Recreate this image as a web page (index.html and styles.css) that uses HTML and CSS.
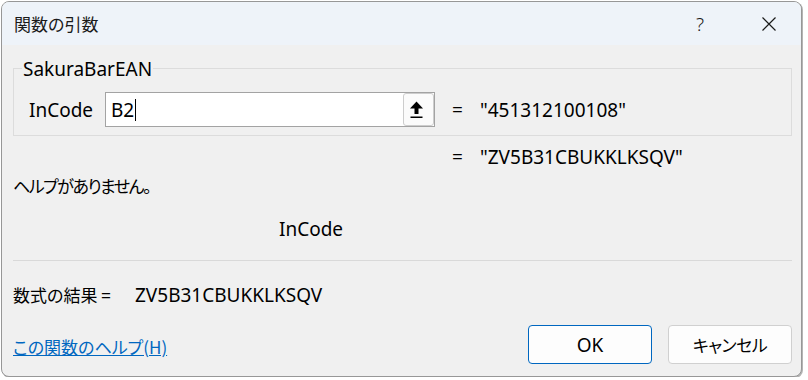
FILE: index.html
```html
<!DOCTYPE html>
<html lang="ja">
<head>
    <meta charset="UTF-8">
    <meta name="viewport" content="width=device-width, initial-scale=1.0">
    <title>関数の引数</title>
    <link rel="stylesheet" href="styles.css">
</head>
<body>
    <div class="dialog">
        <div class="titlebar">
            <span class="title ja">関数の引数</span>
            <span class="help-btn">?</span>
            <span class="close-btn">
                <svg width="14" height="14" viewBox="0 0 14 14"><path d="M0.5 0.5 L13.5 13.5 M13.5 0.5 L0.5 13.5" stroke="#1a1a1a" stroke-width="1.2" fill="none"/></svg>
            </span>
        </div>

        <div class="content">
            <div class="group">
                <span class="legend">SakuraBarEAN</span>
                <div class="arg-row">
                    <span class="arg-label">InCode</span>
                    <div class="ref-input">
                        <span class="ref-text">B2</span><span class="caret"></span>
                        <span class="collapse-btn">
                            <svg width="29" height="31" viewBox="0 0 29 31">
                                <polygon points="12.5,7.5 6,14.5 19,14.5" fill="#000"/>
                                <rect x="10.5" y="14" width="4" height="6" fill="#000"/>
                                <rect x="6.5" y="22.5" width="12" height="1.5" fill="#000"/>
                            </svg>
                        </span>
                    </div>
                    <span class="eq">=</span>
                    <span class="arg-value">"451312100108"</span>
                </div>
            </div>

            <div class="func-value"><span class="eq">=</span><span>"ZV5B31CBUKKLKSQV"</span></div>
            <p class="desc ja">ヘルプがありません。</p>
            <p class="arg-name">InCode</p>
            <div class="divider"></div>

            <div class="result">
                <span class="result-label ja">数式の結果 =</span>
                <span>ZV5B31CBUKKLKSQV</span>
            </div>

            <div class="footer">
                <a class="help-link ja" href="#">この関数のヘルプ(H)</a>
                <div class="buttons">
                    <button class="btn btn-ok">OK</button>
                    <button class="btn ja">キャンセル</button>
                </div>
            </div>
        </div>
    </div>
</body>
</html>
```

FILE: styles.css
```css
body{
    margin: 0;
    padding: 1px 0 0 1px;
    background: #ffffff;
    font-family: "Noto Sans", "Noto Sans CJK JP", sans-serif;
    font-size: 19px;
    color: #000000;
}

.ja{
    font-family: "Noto Sans CJK JP", sans-serif;
    font-size: 17px;
    font-feature-settings: "palt";
}

.dialog{
    width: 801px;
    height: 376px;
    box-sizing: border-box;
    border: 1px solid #979797;
    border-radius: 8px;
    box-shadow: 1px 1px 0 #b4b4b4;
    background: #f0f0f0;
    overflow: hidden;
}

/* title bar */
.titlebar{
    height: 43px;
    display: flex;
    align-items: center;
    padding: 0 9px 0 12px;
    background: #eef3f9;
}

.title{
    line-height: 24px;
    color: #1a1a1a;
}

.help-btn{
    margin-left: auto;
    width: 46px;
    text-align: center;
    line-height: 24px;
    color: #1a1a1a;
    font-weight: 300;
}

.close-btn{
    margin-left: 23px;
    width: 46px;
    height: 24px;
    display: flex;
    align-items: center;
    justify-content: center;
}

/* body */
.content{
    padding: 0 9px 0 11px;
}

.group{
    position: relative;
    margin-top: 23px;
    border: 1px solid #dcdcdc;
    padding: 23px 0 8px 15px;
}

.legend{
    position: absolute;
    top: -12px;
    left: 8px;
    padding: 0 1px;
    line-height: 24px;
    background: #f0f0f0;
}

.arg-row{
    display: flex;
    align-items: center;
    height: 35px;
}

.arg-label{
    width: 76px;
}

.ref-input{
    width: 330px;
    height: 35px;
    box-sizing: border-box;
    border: 1px solid #a3a3a3;
    background: #ffffff;
    display: flex;
    align-items: center;
    padding-left: 5px;
}

.ref-text{
    line-height: 24px;
}

.caret{
    display: inline-block;
    width: 1px;
    height: 22px;
    margin-left: 1px;
    background: #000000;
}

.collapse-btn{
    margin-left: auto;
    align-self: stretch;
    width: 31px;
    box-sizing: border-box;
    border: 1px solid #cdcdcd;
    border-radius: 3px;
    background: #fbfbfb;
    display: flex;
    align-items: center;
    justify-content: center;
}

.eq{
    display: inline-block;
    width: 28px;
    margin-left: 17px;
}

.func-value{
    margin-top: 9px;
    height: 24px;
    line-height: 24px;
    padding-left: 439px;
}

.func-value .eq{
    margin-left: 0;
}

.desc{
    margin: 5px 0 0;
    line-height: 24px;
    letter-spacing: -1.5px;
}

.arg-name{
    margin: 19px 0 0;
    padding-left: 266px;
    line-height: 24px;
}

.divider{
    margin-top: 19px;
    height: 1px;
    background: #d9d9d9;
}

.result{
    margin-top: 22px;
    display: flex;
    line-height: 24px;
}

.result-label{
    width: 122px;
}

/* footer */
.footer{
    margin-top: 18px;
    display: flex;
    justify-content: space-between;
    align-items: center;
}

.help-link{
    color: #0067c0;
    text-decoration: underline;
    padding-top: 3px;
}

.buttons{
    display: flex;
    gap: 16px;
}

.btn{
    width: 124px;
    height: 39px;
    box-sizing: border-box;
    border: 1px solid #d0d0d0;
    border-radius: 4px;
    background: #fdfdfd;
    font-family: "Noto Sans", "Noto Sans CJK JP", sans-serif;
    font-size: 19px;
    color: #000000;
    padding: 0;
}

.btn.ja{
    font-family: "Noto Sans CJK JP", sans-serif;
    font-size: 17px;
    letter-spacing: -0.5px;
}

.btn-ok{
    border-color: #0067c0;
}
```
